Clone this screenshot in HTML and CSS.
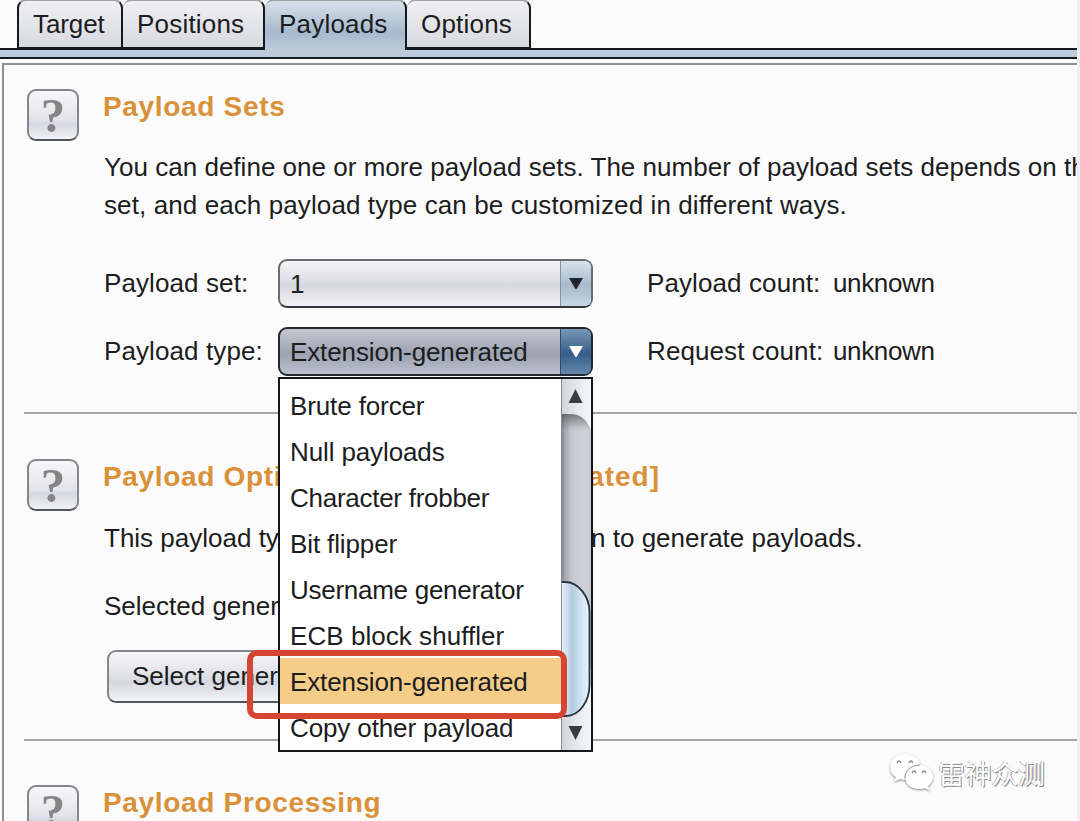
FILE: index.html
```html
<!DOCTYPE html>
<html lang="en">
<head>
<meta charset="utf-8">
<title>Payloads</title>
<link rel="stylesheet" href="styles.css">
</head>
<body>
<div class="window">
  <nav class="tabs">
    <div class="tab t-target"><span>Target</span></div>
    <div class="tab t-positions"><span>Positions</span></div>
    <div class="tab t-payloads active"><span>Payloads</span></div>
    <div class="tab t-options"><span>Options</span></div>
  </nav>
  <div class="band"></div>
  <main class="panel">
    <section class="section first">
      <div class="help">?</div>
      <div class="body">
        <h2>Payload Sets</h2>
        <p class="intro"><span class="l1">You can define one or more payload sets. The number of payload sets depends on the</span><br><span class="l2">set, and each payload type can be customized in different ways.</span></p>
        <div class="row">
          <label>Payload set:</label>
          <div class="combo"><span class="value">1</span><span class="arrow"><svg width="14" height="11" viewBox="0 0 14 11"><path d="M0 0h14L7.6 11H6.4z" fill="#20262b"/></svg></span></div>
          <span class="count">Payload count:</span><span class="unk">unknown</span>
        </div>
        <div class="row">
          <label>Payload type:</label>
          <div class="combo open"><span class="value">Extension-generated</span><span class="arrow"><svg width="14" height="11" viewBox="0 0 14 11"><path d="M0 0h14L7.6 11H6.4z" fill="#fff"/></svg></span>
            <div class="popup">
              <ul>
                <li>Brute forcer</li><li>Null payloads</li><li class="tight">Character frobber</li><li>Bit flipper</li><li class="tight">Username generator</li><li class="loose">ECB block shuffler</li><li class="selected">Extension-generated</li><li>Copy other payload</li>
              </ul>
              <svg class="scroll" width="30" height="371" viewBox="0 0 30 371">
                <defs>
                  <linearGradient id="track"><stop offset="0" stop-color="#777881"/><stop offset=".12" stop-color="#a4a5ae"/><stop offset=".35" stop-color="#c6c6d0"/><stop offset=".8" stop-color="#d1d1da"/><stop offset="1" stop-color="#c8c8d1"/></linearGradient>
                  <linearGradient id="cap"><stop offset="0" stop-color="#d0d2d6"/><stop offset=".4" stop-color="#e2e4e7"/><stop offset="1" stop-color="#f6f7f8"/></linearGradient>
                  <linearGradient id="thumb"><stop offset="0" stop-color="#e8f1f7"/><stop offset=".2" stop-color="#d4e2ee"/><stop offset=".38" stop-color="#b2c9de"/><stop offset=".62" stop-color="#c8deee"/><stop offset="1" stop-color="#e5f6ff"/></linearGradient>
                  <linearGradient id="shade" x2="0" y2="1"><stop offset="0" stop-color="#46474c" stop-opacity=".7"/><stop offset="1" stop-color="#777" stop-opacity="0"/></linearGradient>
                </defs>
                <path d="M0 0h30v371H0z" fill="url(#track)"/>
                <path d="M0 34h30v18H0z" fill="url(#shade)"/>
                <path d="M0 0h30v51C26 41 20 35 9 35H0z" fill="url(#cap)"/>
                <path d="M0 290h30v81H0z" fill="url(#cap)"/>
                <path d="M0 203h4c14 0 24.500 15 24.500 30v73c0 16-10 31-23.500 31H0z" fill="url(#thumb)" stroke="#283440" stroke-width="1.8"/>
                <path d="M0 0v371" stroke="#898c91" stroke-width="2"/>
                <path d="M14.500 10l7 14h-14z" fill="#393d41"/>
                <path d="M7.500 347h14l-7 14z" fill="#393d41"/>
              </svg>
              <div class="marker"></div>
            </div>
          </div>
          <span class="count">Request count:</span><span class="unk">unknown</span>
        </div>
      </div>
    </section>
    <section class="section second">
      <div class="help">?</div>
      <div class="body">
        <h2>Payload Opti<span class="wide">ons [Extension-generated]</span></h2>
        <p class="desc">This payload type invokes a Burp extension to generate payloads.</p>
        <p class="sel">Selected generator:</p>
        <div class="button">Select generator ...</div>
      </div>
    </section>
    <section class="section third">
      <div class="help">?</div>
      <div class="body"><h2>Payload Processing</h2></div>
    </section>
  </main>
</div>
<div class="watermark">
  <svg width="46" height="40" viewBox="0 0 46 40">
    <g class="bubbles" fill="#fff">
      <path d="M16 1C7 1 1 7 1 14c0 4 2 8 6 10l-2 5 6-3c2 1 5 1 8 1 8-1 13-6 13-13S25 1 16 1z"/>
      <path d="M30 12c-8 0-14 5-14 12s6 12 14 12c2 0 4 0 6-1l5 3-2-5c3-2 5-5 5-9 0-7-6-12-14-12z"/>
    </g>
    <path d="M16 25c0-7 6-13 15-13" fill="none" stroke="#999" stroke-width="1"/>
    <path d="M8 10q2-4 4 0M20 10q2-4 4 0M23 20q2-4 4 0M33 20q2-4 4 0" fill="none" stroke="#8b8b8b" stroke-width="1.3"/>
  </svg>
  <span>雷神众测</span>
</div>
</body>
</html>
```
FILE: styles.css
```css
* { box-sizing: border-box; }
body { margin: 0; width: 1080px; height: 821px; overflow: hidden; position: relative; background: #f0f0f1; color: #1b1d20; font: 26px/38px "Liberation Sans", Arial, sans-serif; white-space: nowrap; }
.window { width: 1077px; height: 821px; overflow: hidden; background: #fbfbfb; display: flex; flex-direction: column; }
.tabs { display: flex; height: 50px; flex: none; padding-left: 17px; border-bottom: 2px solid #15181d; }
.tab { height: 50px; margin-top: -1px; border: 2px solid #15181d; border-top-color: #a0a3a8; border-left-width: 0; border-radius: 9px 9px 0 0; background: linear-gradient(#f0f0f3, #dfe0e5 70%, #d9dae1); padding: 4px 0 0 14px; letter-spacing: .2px; }
.t-target { width: 106px; border-left-width: 2px; letter-spacing: -.1px; }
.t-positions { width: 142px; }
.t-payloads { width: 142px; }
.t-options { width: 124px; }
.tab.active { height: 51px; background: linear-gradient(#d7e0ea, #a6bacd 65%, #bccadb); border-bottom: 0; }
.band { height: 9px; flex: none; background: #bccadc; border-bottom: 2px solid #17191e; }
.panel { flex: 1; margin: 4px 0 0 2px; border: solid #8c8f94; border-width: 2px 0 0 2px; padding-left: 20px; }
.section { display: flex; padding-left: 3px; }
.first { height: 349px; padding-top: 24px; border-bottom: 2px solid #a5a6ac; }
.second { height: 327px; padding-top: 45px; border-bottom: 2px solid #a5a6ac; }
.third { padding-top: 44px; }
.help { flex: none; width: 52px; height: 52px; margin-right: 25px; border: 2px solid #83868a; border-bottom-color: #53565a; border-radius: 9px; background: linear-gradient(#f6f6f9, #e3e3ea 60%, #d5d7e1 68%, #f1f2f6); color: #858585; font: bold 49px/50px "Liberation Serif", serif; text-align: center; }
.body { flex: 1; min-width: 0; }
h2 { margin: -1px 0 0 -1px; font-size: 28px; line-height: 38px; color: #d9913a; letter-spacing: .68px; }
.wide { letter-spacing: .98px; }
p { margin: 0; }
.intro { margin-top: 22px; height: 76px; }
.l1 { letter-spacing: .02px; }
.l2 { letter-spacing: .1px; }
.row { display: flex; height: 48px; margin-top: 35px; align-items: center; }
.row + .row { margin-top: 20px; }
label { width: 174px; letter-spacing: .1px; }
.combo { position: relative; width: 315px; height: 49px; border: 2px solid #686b70; border-bottom-color: #31363b; border-radius: 9px; display: flex; justify-content: space-between; background: linear-gradient(#f5f5f8, #d7d8df 55%, #dcdde3 65%, #f3f3f7); line-height: 46px; letter-spacing: -.12px; }
.value { padding-left: 10px; }
.arrow { width: 31px; display: flex; align-items: center; justify-content: center; border-left: 1px solid #8194a5; border-radius: 0 6px 6px 0; background: linear-gradient(#d7e3ed, #a7bacb 55%, #c7d7e5); }
.combo.open { background: linear-gradient(#c5c8d0, #9da2b0 55%, #bbc0cd); border-color: #24282e; }
.open .arrow { background: linear-gradient(#7896b4, #365e8b 55%, #6287aa); border-color: #324c67; }
.count { margin-left: 54px; width: 186px; letter-spacing: .1px; }
.unk { letter-spacing: -.35px; }
.popup { position: absolute; z-index: 2; left: -2px; top: 48px; width: 315px; height: 375px; border: 2px solid #15161a; background: #fff; display: flex; }
ul { list-style: none; margin: 3px 0 0; padding: 0; width: 282px; height: 368px; }
li { height: 46px; line-height: 48px; padding-left: 10px; }
.tight { letter-spacing: -.27px; }
.loose { letter-spacing: .05px; }
.selected { background: #f6cc89; }
.scroll { display: block; flex: none; }
.marker { position: absolute; left: -33px; top: 271px; width: 320px; height: 69px; border: 6px solid #d54532; border-radius: 10px; }
.desc { margin-top: 23px; }
.sel { margin-top: 30px; }
.button { margin: 25px 0 0 3px; width: 260px; height: 53px; line-height: 49px; border: 2px solid #85888b; border-bottom-color: #54575b; border-radius: 9px; padding-left: 23px; background: linear-gradient(#f6f6f9, #dfe0e6 50%, #d5d7df 62%, #f2f3f6); }
.watermark { position: absolute; left: 889px; top: 753px; display: flex; align-items: center; gap: 3px; color: #fff; font: 27px/40px "Noto Sans CJK SC", sans-serif; letter-spacing: -.3px; text-shadow: 1px 1px 0 #8a8a8a, -1px 0 0 #b5b5b5; }
.bubbles path { filter: drop-shadow(0 1px 1px #888); }
```
